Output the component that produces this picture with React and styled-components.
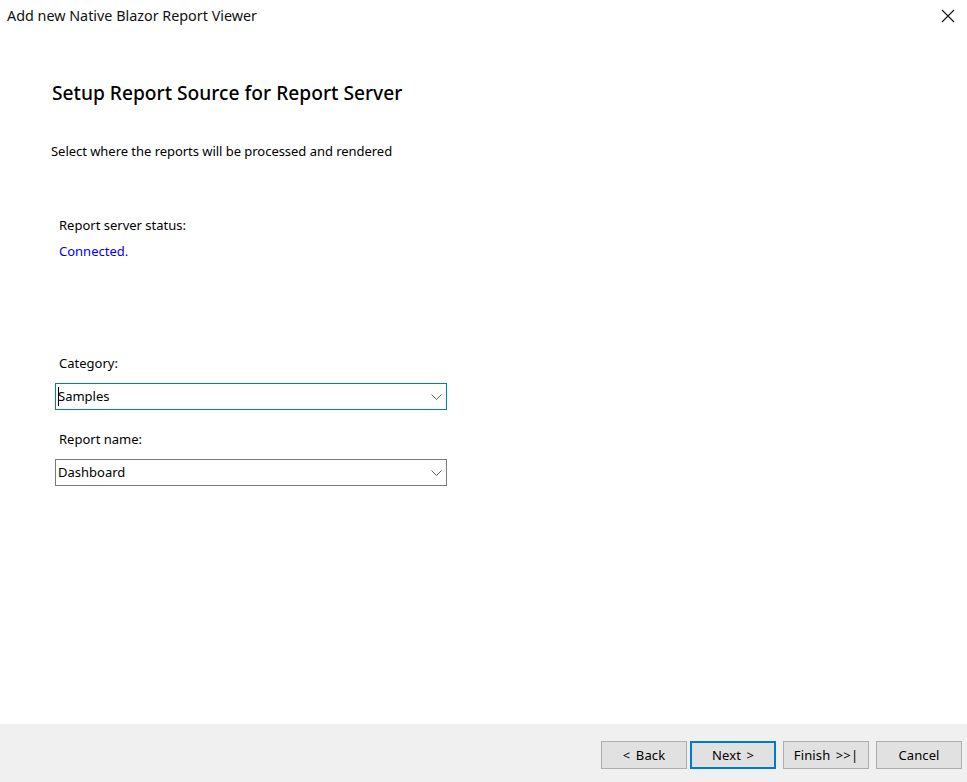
import React from "react";
import styled, { createGlobalStyle } from "styled-components";

const Global = createGlobalStyle`
  html, body { margin: 0; padding: 0; background: #fff; }
  * { box-sizing: border-box; }
`;

const Dialog = styled.div`
  width: 967px;
  height: 782px;
  display: flex;
  flex-direction: column;
  overflow: hidden;
  background: #fff;
  color: #000;
  font-family: "Noto Sans", "Open Sans", sans-serif;
  font-size: 13px;
`;

const TitleBar = styled.header`
  height: 32px;
  flex: none;
  display: flex;
  align-items: center;
  justify-content: space-between;
  padding: 0 12px 0 7px;
`;

const TitleText = styled.div`
  font-size: 14.35px;
  line-height: 32px;
  color: #111;
`;

const CloseButton = styled.button`
  width: 14px;
  height: 14px;
  padding: 0;
  border: 0;
  background: none;
  display: flex;
`;

const Content = styled.main`
  flex: 1;
  padding-left: 52px;
  display: flex;
  flex-direction: column;
  align-items: flex-start;
`;

const Heading = styled.h1`
  margin: 48px 0 0;
  font-size: 19.2px;
  font-weight: 500;
  line-height: 26px;
`;

const Subheading = styled.p`
  margin: 36px 0 0 -1px;
  line-height: 18px;
  letter-spacing: -0.04px;
`;

const Label = styled.div`
  margin: ${(p) => p.$top}px 0 0 7px;
  line-height: 18px;
  color: ${(p) => p.$color || "#000"};
`;

const Combo = styled.div`
  position: relative;
  width: 392px;
  height: 27px;
  margin: 11px 0 0 3px;
  padding: 0 0 2px 2px;
  display: flex;
  align-items: center;
  justify-content: space-between;
  border: 1px solid ${(p) => (p.$focused ? "#0078d7" : "#7a7a7a")};
  background: #fff;
`;

const Caret = styled.span`
  position: absolute;
  left: 2px;
  top: 3px;
  width: 1px;
  height: 19px;
  background: #000;
`;

const Chevron = styled.svg`
  width: 11px;
  height: 6px;
  margin: 2px 4px 0 0;
  flex: none;
`;

const Footer = styled.footer`
  height: 58px;
  flex: none;
  background: #f0f0f0;
  display: flex;
  justify-content: flex-end;
  padding: 17px 5px 0 0;
`;

const Button = styled.button`
  width: 86px;
  height: 28px;
  margin-left: ${(p) => p.$gap}px;
  padding: 0;
  border: ${(p) => (p.$primary ? "2px solid #0078d7" : "1px solid #adadad")};
  background: #e1e1e1;
  color: #000;
  font: inherit;
  line-height: 1;
  word-spacing: 2px;
  letter-spacing: 0.12px;
`;

const ChevronIcon = () => (
  <Chevron viewBox="0 0 11 6" fill="none" stroke="#606060" strokeWidth="1">
    <path d="M0.5 0.5 L5.5 5.5 L10.5 0.5" />
  </Chevron>
);

export default function App() {
  return (
    <Dialog>
      <Global />
      <TitleBar>
        <TitleText>Add new Native Blazor Report Viewer</TitleText>
        <CloseButton aria-label="Close">
          <svg width="14" height="14" viewBox="0 0 14 14" fill="none" stroke="#111" strokeWidth="1.1">
            <path d="M1 1 L13 13 M13 1 L1 13" />
          </svg>
        </CloseButton>
      </TitleBar>
      <Content>
        <Heading>Setup Report Source for Report Server</Heading>
        <Subheading>Select where the reports will be processed and rendered</Subheading>
        <Label $top={56}>Report server status:</Label>
        <Label $top={8} $color="#0000ff">Connected.</Label>
        <Label $top={94}>Category:</Label>
        <Combo $focused>
          <Caret />
          <span>Samples</span>
          <ChevronIcon />
        </Combo>
        <Label $top={20}>Report name:</Label>
        <Combo>
          <span>Dashboard</span>
          <ChevronIcon />
        </Combo>
      </Content>
      <Footer>
        <Button $gap={0}>&lt; Back</Button>
        <Button $gap={3} $primary>Next &gt;</Button>
        <Button $gap={7}>Finish &gt;&gt;|</Button>
        <Button $gap={7}>Cancel</Button>
      </Footer>
    </Dialog>
  );
}
